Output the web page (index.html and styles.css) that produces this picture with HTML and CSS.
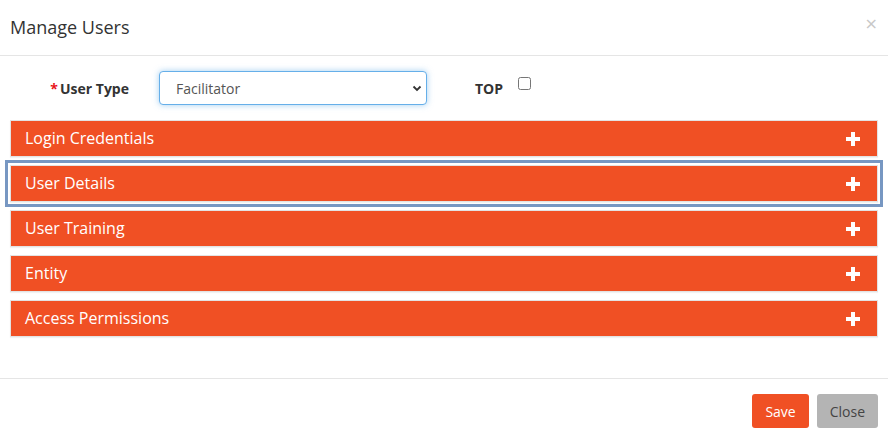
FILE: index.html
```html
<!DOCTYPE html>
<html lang="en">
<head>
  <meta charset="UTF-8">
  <title>Manage Users</title>
  <link rel="stylesheet" href="styles.css">
</head>
<body>

  <div class="modal">
    <div class="modal-header">
      <h4 class="modal-title">Manage Users</h4>
      <button class="close" type="button">&times;</button>
    </div>

    <div class="modal-body">
      <div class="form-row">
        <label class="control-label" for="user-type"><span class="req">*</span>User Type</label>
        <span class="select-wrap">
          <select id="user-type">
            <option>Facilitator</option>
            <option>Administrator</option>
            <option>Learner</option>
          </select>
          <svg class="chevron" width="10" height="7" viewBox="0 0 10 7"><path d="M1.5 1.5 L5 5 L8.5 1.5" fill="none" stroke="#333" stroke-width="1.8"/></svg>
        </span>
        <label class="top-label" for="top">TOP</label>
        <input type="checkbox" id="top" class="top-check">
      </div>

      <div class="panel-group">
        <div class="panel"><span>Login Credentials</span><svg class="plus" width="14" height="14" viewBox="0 0 14 14"><path d="M7 0v14M0 7h14" stroke="#fff" stroke-width="4"/></svg></div>
        <div class="panel focused"><span>User Details</span><svg class="plus" width="14" height="14" viewBox="0 0 14 14"><path d="M7 0v14M0 7h14" stroke="#fff" stroke-width="4"/></svg></div>
        <div class="panel"><span>User Training</span><svg class="plus" width="14" height="14" viewBox="0 0 14 14"><path d="M7 0v14M0 7h14" stroke="#fff" stroke-width="4"/></svg></div>
        <div class="panel"><span>Entity</span><svg class="plus" width="14" height="14" viewBox="0 0 14 14"><path d="M7 0v14M0 7h14" stroke="#fff" stroke-width="4"/></svg></div>
        <div class="panel"><span>Access Permissions</span><svg class="plus" width="14" height="14" viewBox="0 0 14 14"><path d="M7 0v14M0 7h14" stroke="#fff" stroke-width="4"/></svg></div>
      </div>
    </div>

    <div class="modal-footer">
      <button class="btn btn-save" type="button">Save</button>
      <button class="btn btn-close" type="button">Close</button>
    </div>
  </div>

</body>
</html>
```

FILE: styles.css
```css
body {
  margin: 0;
  font-family: "Open Sans", "Liberation Sans", sans-serif;
  font-size: 14px;
  color: #333;
  background-color: #fff;
}
.modal {
  width: 888px;
}
.modal-header {
  display: flex;
  justify-content: space-between;
  align-items: flex-start;
  padding: 15px 10px;
  height: 25px;
  border-bottom: 1px solid #e5e5e5;
}
.modal-title {
  margin: 0;
  font-size: 18px;
  font-weight: normal;
  line-height: 25px;
  color: #333;
}
.close {
  border: 0;
  background: none;
  padding: 0;
  margin-top: 1px;
  margin-right: 0;
  font-family: "DejaVu Sans", sans-serif;
  font-size: 16px;
  line-height: 15px;
  color: #c8c8c8;
}
.modal-body {
  padding: 15px 10px 41px;
}
.form-row {
  display: flex;
  align-items: center;
  height: 34px;
}
.control-label {
  width: 119px;
  text-align: right;
  font-weight: bold;
  margin-top: 1px;
}
.req {
  color: #e8141a;
  margin-right: 2px;
}
.select-wrap {
  position: relative;
  margin-left: 30px;
}
.select-wrap select {
  -webkit-appearance: none;
  appearance: none;
  width: 268px;
  height: 34px;
  padding: 0 16px;
  font-family: inherit;
  font-size: 14px;
  color: #555;
  background: #fff;
  border: 1px solid #66afe9;
  border-radius: 4px;
  box-shadow: 0 0 6px rgba(102, 175, 233, 0.6);
  outline: none;
}
.chevron {
  position: absolute;
  right: 5px;
  top: 14px;
}
.top-label {
  font-weight: bold;
  margin-left: 48px;
  margin-top: 1px;
}
.top-check {
  width: 13px;
  height: 13px;
  margin: 0 0 10px 15px;
}
.panel-group {
  margin-top: 15px;
  display: flex;
  flex-direction: column;
  gap: 8px;
}
.panel {
  display: flex;
  justify-content: space-between;
  align-items: center;
  height: 35px;
  padding: 0 17px 0 14px;
  background-color: #f05024;
  border: 1px solid #e3e3e3;
  box-shadow: 0 1px 1px rgba(0, 0, 0, 0.05);
  color: #fff;
  font-size: 16px;
}
.panel span {
  margin-top: -1px;
}
.panel.focused {
  outline: 3px solid #7797c2;
  outline-offset: 2px;
}
.modal-footer {
  display: flex;
  justify-content: flex-end;
  gap: 8px;
  padding: 15px 10px;
  border-top: 1px solid #e5e5e5;
}
.btn {
  height: 34px;
  padding: 0 13px;
  font-family: inherit;
  font-size: 14px;
  border: 0;
  border-radius: 3px;
}
.btn-save {
  background-color: #f05024;
  color: #fff;
}
.btn-close {
  background-color: #b4b4b4;
  color: #444;
}
```
